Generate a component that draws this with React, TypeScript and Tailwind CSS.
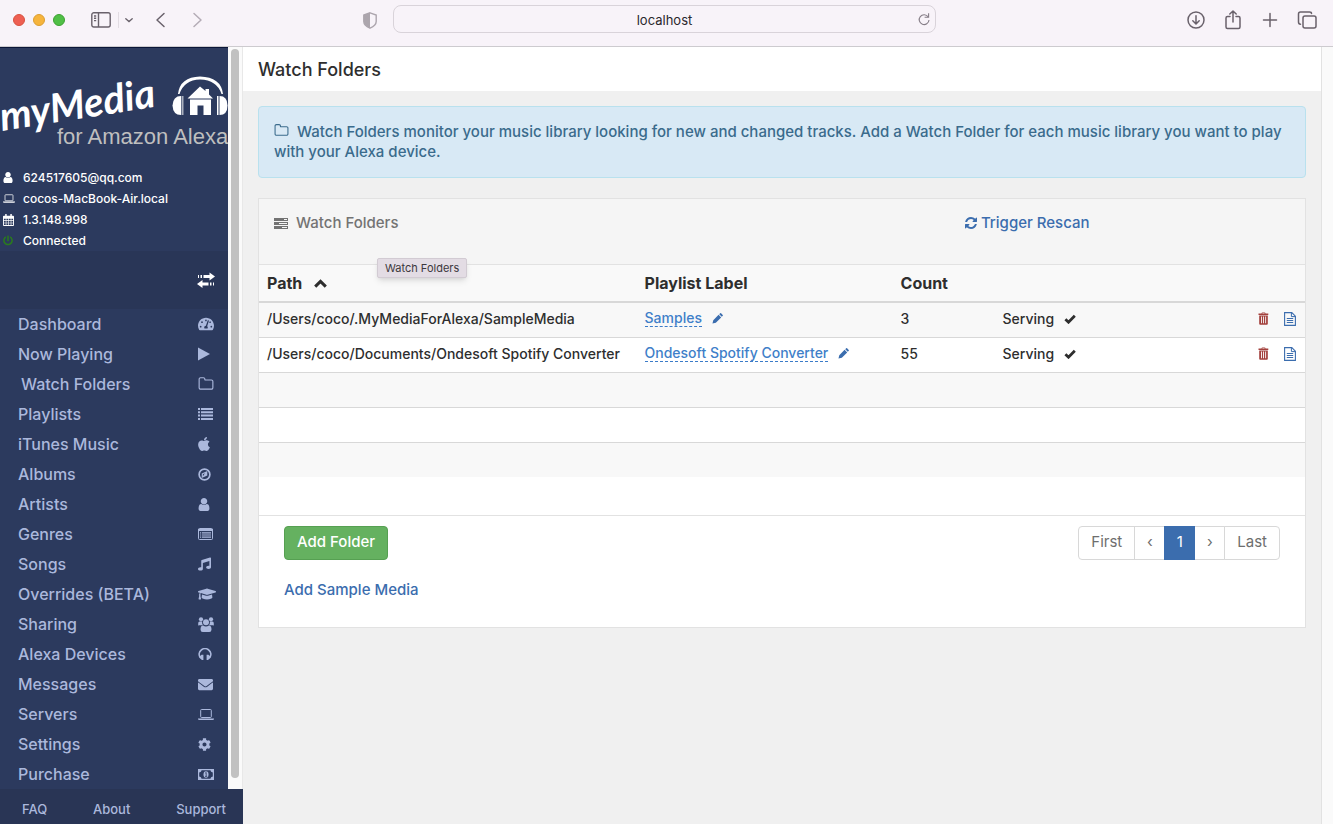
import type { ReactNode } from "react";
import { FaApple, FaCog, FaEnvelope, FaGraduationCap, FaMusic, FaPowerOff, FaTachometerAlt } from "react-icons/fa";

type IconProps = { className?: string };

const shapes: Record<string, { box: string; body: ReactNode }> = {
  play: {
    box: "0 0 12 14",
    body: <path d="M0 0.4v13.2L12 7z" fill="currentColor" />,
  },
  folder: {
    box: "0 0 1792 1792",
    body: (
      <path
        fill="currentColor"
        d="M1600 1312v-704q0-40-28-68t-68-28h-704q-40 0-68-28t-28-68v-64q0-40-28-68t-68-28h-320q-40 0-68 28t-28 68v960q0 40 28 68t68 28h1216q40 0 68-28t28-68zm128-704v704q0 92-66 158t-158 66h-1216q-92 0-158-66t-66-158v-960q0-92 66-158t158-66h320q92 0 158 66t66 158v32h672q92 0 158 66t66 158z"
      />
    ),
  },
  user: {
    box: "256 128 1280 1536",
    body: (
      <path
        fill="currentColor"
        d="M1536 1399q0 109-62.5 187t-150.5 78h-854q-88 0-150.5-78t-62.5-187q0-85 8.5-160.5t31.5-152 58.5-131 94-89 134.5-34.5q131 128 313 128t313-128q76 0 134.5 34.5t94 89 58.5 131 31.5 152 8.5 160.5zm-256-887q0 159-112.5 271.5t-271.5 112.5-271.5-112.5-112.5-271.5 112.5-271.5 271.5-112.5 271.5 112.5 112.5 271.5z"
      />
    ),
  },
  refresh: {
    box: "128 128 1536 1536",
    body: (
      <path
        fill="currentColor"
        d="M1639 1056q0 5-1 7-64 268-268 434.5t-478 166.5q-146 0-282.5-55t-243.5-157l-129 129q-19 19-45 19t-45-19-19-45v-448q0-26 19-45t45-19h448q26 0 45 19t19 45-19 45l-137 137q71 66 161 102t187 36q134 0 250-65t186-179q11-17 53-117 8-23 30-23h192q13 0 22.5 9.5t9.5 22.5zm25-800v448q0 26-19 45t-45 19h-448q-26 0-45-19t-19-45 19-45l138-138q-148-137-349-137-134 0-250 65t-186 179q-11 17-53 117-8 23-30 23h-199q-13 0-22.5-9.5t-9.5-22.5v-7q65-268 270-434.5t480-166.5q146 0 284 55.5t245 156.5l130-129q19-19 45-19t45 19 19 45z"
      />
    ),
  },
  list: {
    box: "0 0 15 12",
    body: <path fill="currentColor" d="M0 0h2v2H0zM3 0h12v2H3zM0 3.3h2v2H0zM3 3.3h12v2H3zM0 6.6h2v2H0zM3 6.6h12v2H3zM0 10h2v2H0zM3 10h12v2H3z" />,
  },
  compass: {
    box: "0 0 14 14",
    body: (
      <>
        <circle cx="7" cy="7" r="5.8" fill="none" stroke="currentColor" strokeWidth="1.8" />
        <path fillRule="evenodd" fill="currentColor" d="M10 3.2v5L4 10.8v-5zM7.4 5.6 5.3 6.6v2.2z" />
      </>
    ),
  },
  listAlt: {
    box: "0 0 15 12",
    body: (
      <>
        <rect x="0.5" y="0.5" width="14" height="11" rx="1" fill="none" stroke="currentColor" />
        <path fill="currentColor" d="M0 1h15v2H0zM2 4.2h1.2v1.2H2zM4 4.2h9v1.2H4zM2 6.4h1.2v1.2H2zM4 6.4h9v1.2H4zM2 8.6h1.2v1.2H2zM4 8.6h9v1.2H4z" />
      </>
    ),
  },
  group: {
    box: "0 0 16 15",
    body: (
      <g fill="currentColor">
        <circle cx="3" cy="2.3" r="2.1" />
        <circle cx="13" cy="2.3" r="2.1" />
        <path d="M0.2 8.2V6.4Q0.2 4.6 1.5 4.6h2.6Q3.9 6.6 4.9 8.3H1.2Q0.2 8.6 0.2 8.2zM15.8 8.2V6.4q0-1.8-1.3-1.8h-2.6q0.2 2-0.8 3.7h3.7q1 0.3 1-0.1z" />
        <circle cx="8" cy="5.3" r="3" />
        <path d="M2.5 12.4q0-3.8 2.6-3.8Q8 10.4 10.9 8.6q2.6 0 2.6 3.8 0 2.5-2.2 2.5H4.7q-2.2 0-2.2-2.5z" />
      </g>
    ),
  },
  headphones: {
    box: "0 0 14 12",
    body: (
      <>
        <path d="M2.2 9.4A5.8 5.6 0 1 1 11.8 9.4" fill="none" stroke="currentColor" strokeWidth="1.7" />
        <path fill="currentColor" d="M3.6 6.8h1.8V12H4L1.6 10V8.600zM10.400 6.800H8.600V12H10l2.400-2V8.600z" />
      </>
    ),
  },
  laptop: {
    box: "0 0 16 11",
    body: (
      <>
        <rect x="2.7" y="0.5" width="10.6" height="8" rx="0.8" fill="none" stroke="currentColor" />
        <path fill="currentColor" d="M0 9.4h16v0.7q0 0.9-1.4 0.9H1.4Q0 11 0 10.1z" />
      </>
    ),
  },
  money: {
    box: "0 0 16 11",
    body: (
      <>
        <path fillRule="evenodd" fill="currentColor" d="M0 0h16v11H0zM3.6 1.2Q3.4 3 1.2 3.4v4.2q2.2 0.4 2.4 2.2h8.8q0.2-1.8 2.4-2.2V3.4Q12.6 3 12.4 1.2z" />
        <ellipse cx="8" cy="5.5" rx="2.5" ry="3.3" fill="currentColor" />
        <path d="M7.2 4.2l1-0.8v3.8M7 7.4h2.2" fill="none" stroke="#2c3a5e" strokeWidth="0.8" />
      </>
    ),
  },
  calendar: {
    box: "0 0 12 13",
    body: (
      <>
        <path fillRule="evenodd" fill="currentColor" d="M1 1.8h10q1 0 1 1V12q0 1-1 1H1q-1 0-1-1V2.8q0-1 1-1zM1 5v1.9h2V5zM3.7 5v1.9h2V5zM6.4 5v1.9h2V5zM9.1 5v1.9H11V5zM1 7.5v2h2v-2zM3.7 7.5v2h2v-2zM6.4 7.5v2h2v-2zM9.1 7.5v2H11v-2zM1 10.1V12h2v-1.9zM3.7 10.1V12h2v-1.9zM6.4 10.1V12h2v-1.9zM9.1 10.1V12H11v-1.9z" />
        <path fill="currentColor" d="M2.4 0h1.6v3H2.4zM8 0h1.6v3H8z" />
      </>
    ),
  },
  tasks: {
    box: "0 0 14 11",
    body: <path fillRule="evenodd" fill="currentColor" d="M0 0h14v3H0zM10 1v1h3V1zM0 4h14v3H0zM5 5v1h8V5zM0 8h14v3H0zM8 9v1h5V9z" />,
  },
  transfer: {
    box: "0 0 18 16",
    body: <path fill="currentColor" d="M1 3h1v3H1zM3.5 3h1.500v3H3.500zM6.500 3h6V0.500L18 4.500 12.500 8.500V6h-6zM17 10.500h-1v3H17zM14.500 10.500H13v3h1.500zM11.500 10.500h-6V8L0 12l5.500 4v-2.500h6z" />,
  },
  trash: {
    box: "0 0 11 13",
    body: <path fillRule="evenodd" fill="currentColor" d="M3.5 1.4Q3.5 0.4 4.5 0.4h2Q7.5 0.4 7.5 1.4H10.3V3H0.5V1.4zM4.4 1.4h2.2V1H4.4zM1.2 3.6h8.6V11.8q0 1-1 1H2.2q-1 0-1-1zM3 4.6v6.6h0.9V4.6zM5.1 4.6v6.6H6V4.6zM7.2 4.6v6.6h0.9V4.6z" />,
  },
  file: {
    box: "0 0 12 14",
    body: (
      <>
        <path d="M0.6 0.6h7.2l3.6 3.6v9.2H0.6z" fill="none" stroke="currentColor" strokeWidth="1.1" />
        <path d="M7.4 0.6v4h4M2.8 6.5h6.4M2.8 8.500h6.400M2.800 10.500h6.400" fill="none" stroke="currentColor" />
      </>
    ),
  },
  caret: {
    box: "0 0 13 9",
    body: <path d="M1.2 7.6 6.5 2.4l5.3 5.2" fill="none" stroke="currentColor" strokeWidth="3" />,
  },
  check: {
    box: "0 0 12 10",
    body: <path d="M1.400 5.200 4.500 8.200 10.800 1.800" fill="none" stroke="currentColor" strokeWidth="2.800" />,
  },
  pencil: {
    box: "0 0 12 12",
    body: <path fill="currentColor" d="M0.500 11.500 1.400 7.800 7.200 2l2.800 2.800-5.800 5.800zM7.900 1.300 8.900 0.300q0.500-0.400 1 0l1.800 1.800q0.500 0.500 0 1l-1 1z" />,
  },
};

function Shape({ name, className }: { name: string; className?: string }) {
  const { box, body } = shapes[name];
  return (
    <svg viewBox={box} className={className} aria-hidden="true">
      {body}
    </svg>
  );
}

const navItems: { label: string; icon: ReactNode }[] = [
  { label: "Dashboard", icon: <FaTachometerAlt className="h-4 w-4" /> },
  { label: "Now Playing", icon: <Shape name="play" className="h-3.5 w-3" /> },
  { label: "Watch Folders", icon: <Shape name="folder" className="h-4 w-4" /> },
  { label: "Playlists", icon: <Shape name="list" className="h-3 w-[15px]" /> },
  { label: "iTunes Music", icon: <FaApple className="h-4 w-3" preserveAspectRatio="xMidYMid slice" /> },
  { label: "Albums", icon: <Shape name="compass" className="h-[13px] w-[13px]" /> },
  { label: "Artists", icon: <Shape name="user" className="h-[13px] w-3" /> },
  { label: "Genres", icon: <Shape name="listAlt" className="h-3 w-[15px]" /> },
  { label: "Songs", icon: <FaMusic className="h-3.5 w-[13px]" /> },
  { label: "Overrides (BETA)", icon: <FaGraduationCap className="h-4 w-[19px]" /> },
  { label: "Sharing", icon: <Shape name="group" className="h-[15px] w-4" /> },
  { label: "Alexa Devices", icon: <Shape name="headphones" className="h-3 w-3.5" /> },
  { label: "Messages", icon: <FaEnvelope className="h-[15px] w-[15px]" /> },
  { label: "Servers", icon: <Shape name="laptop" className="h-[11px] w-4" /> },
  { label: "Settings", icon: <FaCog className="h-[13px] w-[13px]" /> },
  { label: "Purchase", icon: <Shape name="money" className="h-[11px] w-4" /> },
];

const statusRows: { text: string; icon: ReactNode }[] = [
  { text: "624517605@qq.com", icon: <Shape name="user" className="h-[11px] w-[10px]" /> },
  { text: "cocos-MacBook-Air.local", icon: <Shape name="laptop" className="h-[9px] w-3" /> },
  { text: "1.3.148.998", icon: <Shape name="calendar" className="h-3 w-[11px]" /> },
  { text: "Connected", icon: <FaPowerOff className="h-[11px] w-[10px] text-[#2a7a1e]" /> },
];

const folders = [
  { path: "/Users/coco/.MyMediaForAlexa/SampleMedia", label: "Samples", count: 3 },
  { path: "/Users/coco/Documents/Ondesoft Spotify Converter", label: "Ondesoft Spotify Converter", count: 55 },
];

const pages = ["First", "‹", "1", "›", "Last"];

function StrokeIcon({ className, children }: IconProps & { children: ReactNode }) {
  return (
    <svg viewBox="0 0 20 20" fill="none" stroke="currentColor" strokeWidth="1.5" strokeLinecap="round" strokeLinejoin="round" className={className} aria-hidden="true">
      {children}
    </svg>
  );
}

function BrowserBar() {
  return (
    <header className="flex h-[47px] shrink-0 items-start border-b border-[#cdcbcf] bg-[#f8f3f9] pl-3 pr-3.5 pt-1 text-[#69616b]">
      <div className="flex h-8 flex-1 items-center">
        <span className="ml-px h-3 w-3 rounded-full border border-[#d8513f] bg-[#ee5f53]" />
        <span className="ml-2 h-3 w-3 rounded-full border border-[#dc9e32] bg-[#f6b43d]" />
        <span className="ml-2 h-3 w-3 rounded-full border border-[#3da133] bg-[#50bf46]" />
        <button aria-label="Sidebar" className="ml-[26px]">
          <svg viewBox="0 0 20 16" fill="none" stroke="currentColor" strokeWidth="1.4" className="h-4 w-5">
            <rect x="0.8" y="0.8" width="18.4" height="14.2" rx="2" />
            <path d="M7.5 1v14M3 4h2.2M3 6.3h2.2M3 8.6h2.2" />
          </svg>
        </button>
        <span className="ml-[7px] h-4 w-px bg-[#e2dce3]" />
        <button aria-label="Tab groups" className="ml-1.5">
          <svg viewBox="0 0 8 5" fill="none" stroke="currentColor" strokeWidth="1.3" strokeLinecap="round" className="h-[5px] w-2">
            <path d="M0.8 0.8 4 3.6l3.2-2.8" />
          </svg>
        </button>
        <button aria-label="Back" className="ml-[18px]">
          <StrokeIcon className="h-5 w-5">
            <path d="M13 3.5 6 10l7 6.5" />
          </StrokeIcon>
        </button>
        <button aria-label="Forward" className="ml-4 text-[#b4acb6]">
          <StrokeIcon className="h-5 w-5">
            <path d="m7 3.5 7 6.5-7 6.5" />
          </StrokeIcon>
        </button>
        <span className="flex-1" />
        <button aria-label="Privacy report" className="mr-4 text-[#aca5ad]">
          <svg viewBox="0 0 14 17" className="h-[17px] w-3.5">
            <path d="M7 0.8 13.2 3v6.4q0 3.8-6.2 6.8Q0.8 13.2 0.8 9.4V3z" fill="none" stroke="currentColor" strokeWidth="1.4" />
            <path d="M7 0.8 0.8 3v6.4q0 3.8 6.2 6.8z" fill="currentColor" />
          </svg>
        </button>
      </div>
      <div className="relative mt-px h-7 w-[543px]">
        <input
          aria-label="Address"
          defaultValue="localhost"
          className="h-7 w-full rounded-lg border border-[#d9d3da] bg-transparent pt-0.5 text-center text-[13px] text-[#2b272c] outline-none"
        />
        <button aria-label="Reload" className="absolute right-[5px] top-[7px] text-[#857d87]">
          <svg viewBox="0 0 14 14" fill="none" stroke="currentColor" strokeWidth="1.1" className="h-3.5 w-3.5">
            <path d="M11.2 5A4.9 4.9 0 1 0 12 8" />
            <path d="M11.600 1.200V5.200H7.600" />
          </svg>
        </button>
      </div>
      <div className="flex h-8 flex-1 items-center justify-end gap-[17px] pr-0.5">
        <button aria-label="Downloads">
          <StrokeIcon className="h-5 w-5">
            <circle cx="10" cy="10" r="8" />
            <path d="M10 5.8v8M6.8 10.8 10 14l3.2-3.2" />
          </StrokeIcon>
        </button>
        <button aria-label="Share">
          <StrokeIcon className="h-5 w-5">
            <path d="M7 6.500H4.500Q3 6.500 3 8v9q0 1.500 1.500 1.500h11Q17 18.500 17 17V8q0-1.500-1.500-1.500H13M10 12V1M6.800 4 10 1l3.200 3" />
          </StrokeIcon>
        </button>
        <button aria-label="New tab">
          <StrokeIcon className="h-5 w-5">
            <path d="M10 3.500v13M3.500 10h13" />
          </StrokeIcon>
        </button>
        <button aria-label="Tab overview">
          <StrokeIcon className="h-5 w-5">
            <rect x="6" y="6" width="13" height="12" rx="2" />
            <path d="M3.500 14.200Q1.500 14.200 1.500 12V4Q1.500 2 3.500 2h9Q14.500 2 14.500 3.500" />
          </StrokeIcon>
        </button>
      </div>
    </header>
  );
}

function Logo() {
  return (
    <svg viewBox="0 0 228 119" className="h-[119px] w-full" role="img" aria-label="myMedia for Amazon Alexa">
      <text x="2" y="83" transform="rotate(-9 2 83)" fontSize="40" fontWeight="700" fontStyle="italic" className="font-['Lato',sans-serif]" fill="#fff">
        myMedia
      </text>
      <text x="57" y="96" fontSize="22" className="font-['Liberation_Sans',sans-serif]" fill="#bfbfbf">
        for Amazon Alexa
      </text>
      <g fill="#fff">
        <path d="M178 46Q180 29 200 28.500 221 29 223 46L221.500 46Q217 32 200 31.500 184 32 179.500 46z" />
        <path d="M181 48v19q-8 0-8.500-9.500 0.500-9.500 8.500-9.500z" />
        <path d="M181.500 48h2v19h-2z" opacity="0.6" />
        <path d="M217 48h1.500v19H217z" />
        <path d="M219.500 48q8 0 8 9.500t-8 9.500z" />
        <path d="M200 38.500 205.500 43V41h3.500v5.500l4 4H187.500z" />
        <path d="M190 51.500h21V67h-7.500v-9.500h-6V67H190z" />
      </g>
    </svg>
  );
}

function Sidebar() {
  return (
    <aside className="flex w-[243px] shrink-0 flex-col">
      <div className="flex min-h-0 flex-1 overflow-hidden">
        <div className="flex-1 border-t border-[#0b1638] bg-[#2c3a5e]">
          <Logo />
          <ul className="text-[12px] font-medium text-white">
            {statusRows.map((row) => (
              <li key={row.text} className="flex h-[21px] items-center">
                <span className="flex w-[23px] pl-[3px]">{row.icon}</span>
                {row.text}
              </li>
            ))}
          </ul>
          <div className="flex h-[58px] items-center justify-end bg-[#293657] pr-[13px] text-white">
            <button aria-label="Collapse menu">
              <Shape name="transfer" className="h-4 w-[18px]" />
            </button>
          </div>
          <nav className="text-[16px] font-medium text-[#abb8dc]">
            {navItems.map((item) => (
              <a key={item.label} href="#" className={`flex h-[30px] items-center pr-3 ${item.label === "Watch Folders" ? "pl-[21px]" : "pl-[18px]"}`}>
                <span className="flex-1">{item.label}</span>
                <span className="flex w-[18px]">{item.icon}</span>
              </a>
            ))}
          </nav>
        </div>
        <div className="flex w-[15px] justify-center border-r border-[#e8e8e8] bg-[#fafafa] pb-[11px] pt-0.5">
          <div className="w-2 rounded-full bg-[#c1c1c1]" />
        </div>
      </div>
      <footer className="flex h-[35px] shrink-0 items-center justify-between bg-[#293555] pb-px pl-[22px] pr-[17px] pt-2 text-[13px] font-medium text-[#abb8dc]">
        <a href="#">FAQ</a>
        <a href="#">About</a>
        <a href="#">Support</a>
      </footer>
    </aside>
  );
}

function FolderTable() {
  return (
    <table className="w-full table-fixed text-left text-[14px] font-medium text-[#2e2e2e]">
      <colgroup>
        <col className="w-[36%]" />
        <col className="w-[256px]" />
        <col className="w-[102px]" />
        <col />
        <col className="w-[60px]" />
      </colgroup>
      <thead className="text-[16px] leading-5">
        <tr className="h-[37px] border-b-2 border-[#d8d8d8] bg-[#f9f9f9]">
          <th className="pl-2 font-bold">
            <button className="flex items-center gap-3">
              Path <Shape name="caret" className="h-[9px] w-[13px]" />
            </button>
          </th>
          <th className="pl-[9px] font-bold">Playlist Label</th>
          <th className="pl-[9px] font-bold">Count</th>
          <th aria-label="Status" />
          <th aria-label="Actions" />
        </tr>
      </thead>
      <tbody>
        {folders.map((folder) => (
          <tr key={folder.path} className="h-[35px] border-b border-[#d8d8d8] odd:bg-[#f8f8f8]">
            <td className="whitespace-nowrap pb-0.5 pl-2">{folder.path}</td>
            <td className="pb-0.5 pl-[9px]">
              <span className="flex items-center gap-[10px] text-[#3b6dae]">
                <a href="#" className="whitespace-nowrap border-b border-dashed border-[#3b7bc8] leading-4 text-[#3f7fc9]">
                  {folder.label}
                </a>
                <button aria-label={`Edit ${folder.label}`}>
                  <Shape name="pencil" className="h-[11px] w-[11px]" />
                </button>
              </span>
            </td>
            <td className="pb-0.5 pl-[9px]">{folder.count}</td>
            <td className="pb-0.5 pl-[9px]">
              <span className="flex items-center gap-[10px]">
                Serving <Shape name="check" className="h-[10px] w-3" />
              </span>
            </td>
            <td className="pb-0.5">
              <span className="flex items-center justify-end gap-[15px] pr-[9px]">
                <button aria-label="Delete folder" className="text-[#a3403c]">
                  <Shape name="trash" className="h-[13px] w-[11px]" />
                </button>
                <button aria-label="Folder details" className="text-[#3b6dae]">
                  <Shape name="file" className="h-3.5 w-3" />
                </button>
              </span>
            </td>
          </tr>
        ))}
        {[0, 1, 2].map((row) => (
          <tr key={row} className="h-[35px] border-b border-[#d8d8d8] last:border-b-0 odd:bg-[#f8f8f8]">
            <td colSpan={5} />
          </tr>
        ))}
      </tbody>
    </table>
  );
}

function Pagination() {
  return (
    <nav aria-label="Pages" className="flex h-[34px] text-[15px] text-[#6e6e6e]">
      {pages.map((page) => {
        const active = page === "1";
        const wide = page.length > 1;
        return (
          <button
            key={page}
            className={`-ml-px border pb-0.5 first:rounded-l last:rounded-r ${
              active ? "z-10 border-[#3b6dae] bg-[#3b6dae] text-white" : "border-[#d8d8d8] bg-white"
            } ${wide ? "px-3" : "w-[31px]"}`}
          >
            {page}
          </button>
        );
      })}
    </nav>
  );
}

function MainPanel() {
  return (
    <main className="min-w-0 flex-1 bg-[#f0f0f0]">
      <h1 className="flex h-11 items-center bg-white px-[15px] text-[18px] font-medium text-[#2e2e2e]">Watch Folders</h1>
      <div className="p-[15px]">
        <p className="min-h-[72px] rounded border border-[#b9e1ee] bg-[#d8e9f5] p-[15px] text-[15px] font-medium leading-5 text-[#3a6b8c]">
          <Shape name="folder" className="-mt-1 mr-2 inline h-[15px] w-[15px]" />
          Watch Folders monitor your music library looking for new and changed tracks. Add a Watch Folder for each music library you want to play with your Alexa device.
        </p>
        <section className="mt-5 border border-[#e2e2e2] bg-white">
          <div className="relative flex h-[66px] items-start border-b border-[#e2e2e2] bg-[#f5f5f5] px-[15px] pt-3.5 text-[15px] font-medium">
            <h2 className="flex w-[68%] items-center gap-2 leading-5 text-[#737373]">
              <Shape name="tasks" className="h-[11px] w-3.5" />
              Watch Folders
            </h2>
            <a href="#" className="flex items-center gap-1 leading-5 text-[#3b6dae]">
              <Shape name="refresh" className="h-3 w-3" />
              Trigger Rescan
            </a>
            <span role="tooltip" className="absolute left-[118px] top-[59px] rounded-xs border border-[#d2cbd3] bg-[#e3dce4] px-[7px] text-[11px] font-normal leading-[18px] text-[#3c383d] shadow-md">
              Watch Folders
            </span>
          </div>
          <FolderTable />
          <div className="mt-[38px] flex items-start justify-between border-t border-[#e2e2e2] px-[25px] pb-[27px] pt-[10px]">
            <div className="flex flex-col items-start gap-5 text-[15px] font-medium">
              <button className="h-[34px] rounded border border-[#56a052] bg-[#65b160] px-3 pb-0.5 text-white">Add Folder</button>
              <a href="#" className="leading-5 text-[#3b6dae]">
                Add Sample Media
              </a>
            </div>
            <Pagination />
          </div>
        </section>
      </div>
    </main>
  );
}

export default function App() {
  return (
    <div className="flex h-screen flex-col overflow-hidden bg-[#f0f0f0] font-['Inter',sans-serif]">
      <BrowserBar />
      <div className="flex min-h-0 flex-1">
        <Sidebar />
        <MainPanel />
        <div className="w-3 shrink-0 border-l border-[#e2e2e2] bg-[#fafafa]" />
      </div>
    </div>
  );
}
